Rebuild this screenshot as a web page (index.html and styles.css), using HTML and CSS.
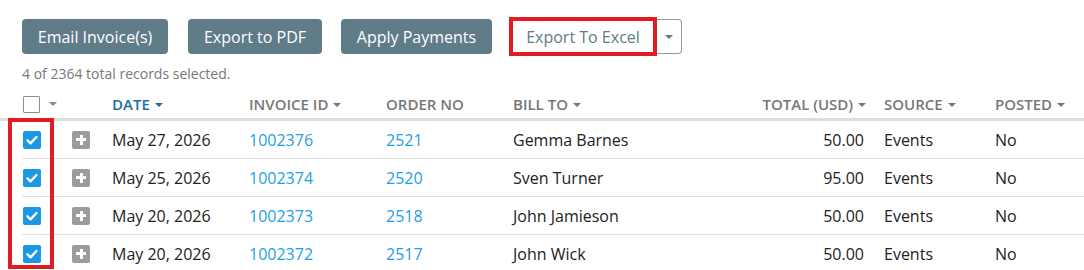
FILE: index.html
```html
<!DOCTYPE html>
<html>
<head>
<meta charset="utf-8">
<link rel="stylesheet" href="styles.css">
</head>
<body>
<div class="page">
  <div class="toolbar">
    <button class="btn">Email Invoice(s)</button>
    <button class="btn">Export to PDF</button>
    <button class="btn">Apply Payments</button>
    <div class="split">
      <button class="btn-excel">Export To Excel</button>
      <button class="btn-drop"><span class="caret"></span></button>
    </div>
  </div>
  <div class="status">4 of 2364 total records selected.</div>
  <div class="table">
    <div class="row head">
      <div class="c-chk"><span class="box"></span><span class="caret small"></span></div>
      <div></div>
      <div class="sorted">DATE <span class="caret"></span></div>
      <div>INVOICE ID <span class="caret"></span></div>
      <div>ORDER NO</div>
      <div>BILL TO <span class="caret"></span></div>
      <div class="num">TOTAL (USD) <span class="caret"></span></div>
      <div>SOURCE <span class="caret"></span></div>
      <div>POSTED <span class="caret"></span></div>
    </div>
    <div class="row">
      <div class="c-chk"><span class="box on"><svg viewBox="0 0 18 18"><path d="M4.5 9.3l3 3 6-6.3" /></svg></span></div>
      <div><span class="plus"></span></div>
      <div>May 27, 2026</div>
      <div><a>1002376</a></div>
      <div><a>2521</a></div>
      <div>Gemma Barnes</div>
      <div class="num">50.00</div>
      <div>Events</div>
      <div>No</div>
    </div>
    <div class="row">
      <div class="c-chk"><span class="box on"><svg viewBox="0 0 18 18"><path d="M4.5 9.3l3 3 6-6.3" /></svg></span></div>
      <div><span class="plus"></span></div>
      <div>May 25, 2026</div>
      <div><a>1002374</a></div>
      <div><a>2520</a></div>
      <div>Sven Turner</div>
      <div class="num">95.00</div>
      <div>Events</div>
      <div>No</div>
    </div>
    <div class="row">
      <div class="c-chk"><span class="box on"><svg viewBox="0 0 18 18"><path d="M4.5 9.3l3 3 6-6.3" /></svg></span></div>
      <div><span class="plus"></span></div>
      <div>May 20, 2026</div>
      <div><a>1002373</a></div>
      <div><a>2518</a></div>
      <div>John Jamieson</div>
      <div class="num">50.00</div>
      <div>Events</div>
      <div>No</div>
    </div>
    <div class="row">
      <div class="c-chk"><span class="box on"><svg viewBox="0 0 18 18"><path d="M4.5 9.3l3 3 6-6.3" /></svg></span></div>
      <div><span class="plus"></span></div>
      <div>May 20, 2026</div>
      <div><a>1002372</a></div>
      <div><a>2517</a></div>
      <div>John Wick</div>
      <div class="num">50.00</div>
      <div>Events</div>
      <div>No</div>
    </div>
    <div class="highlight"></div>
  </div>
</div>
</body>
</html>
```

FILE: styles.css
```css
* { box-sizing: border-box; }
html, body { margin: 0; padding: 0; background: #fff; }
body { font-family: "Open Sans", "DejaVu Sans", sans-serif; color: #222; width: 1084px; height: 270px; overflow: hidden; }
.page { padding-top: 17px; }
.toolbar { display: flex; align-items: center; padding-left: 22px; height: 39px; }
.btn {
  font-family: inherit; font-size: 16px; color: #fff; background: #607c89; white-space: nowrap;
  border: none; border-radius: 4px; height: 35px; padding: 0; margin-right: 20px; cursor: pointer;
}
.btn:nth-child(1) { width: 146px; }
.btn:nth-child(2) { width: 134px; margin-right: 19px; }
.btn:nth-child(3) { width: 151px; margin-right: 17px; }
.split { display: flex; align-items: center; }
.btn-excel {
  font-family: inherit; font-size: 16px; color: #5f7c8a; background: #fff; white-space: nowrap;
  border: 4px solid #e31b23; height: 39px; width: 148px; padding: 0; margin-right: -2px; position: relative; z-index: 1;
}
.btn-drop {
  width: 27px; height: 35px; background: #fff; border: 1px solid #8b9ba5; border-left: none;
  border-radius: 0 4px 4px 0; padding: 0; display: flex; align-items: center; justify-content: center;
}
.caret {
  display: inline-block; width: 0; height: 0; border-left: 4px solid transparent; border-right: 4px solid transparent;
  border-top: 4px solid #777; vertical-align: middle; margin-left: 2px;
}
.btn-drop .caret { border-top-color: #5f7c8a; margin: 0 0 0 1px; }
.status { font-size: 14px; color: #777; padding-left: 22px; margin-top: 9px; line-height: 18px; }
.table { position: relative; }
.row {
  display: grid;
  grid-template-columns: 50px 40px 137px 137px 127px 247px 124px 111px 1fr;
  align-items: center; height: 38px; margin-left: 22px; border-bottom: 1px solid #e2e2e2;
  font-size: 16px;
}
.row.head {
  height: 38px; padding-top: 7px; margin-left: 0; padding-left: 22px; border-bottom: 3px solid #dcdcdc;
  font-size: 15px; font-weight: 600; color: #777;
}
.row.head .sorted { color: #1f6fa3; }
.row.head .sorted .caret { border-top-color: #1f6fa3; }
.row.head .caret { margin-left: 1px; margin-top: -1px; }
.num { text-align: right; padding-right: 20px; }
.row.head .num { padding-right: 18px; }
.c-chk { display: flex; align-items: center; padding-left: 1px; }
.box {
  display: inline-block; width: 17px; height: 17px; border: 1.5px solid #8f8f8f; border-radius: 1px; background: #fff;
}
.row.head .caret.small { margin-left: 9px; border-top-color: #888; }
.box.on { background: #1a98e6; border: none; border-radius: 2px; width: 18px; height: 18px; }
.box svg { display: block; width: 18px; height: 18px; }
.box svg path { fill: none; stroke: #fff; stroke-width: 2.4; stroke-linecap: round; stroke-linejoin: round; }
.plus {
  display: block; width: 18px; height: 18px; background: #9c9c9c; border-radius: 2px; position: relative;
}
.plus::before, .plus::after { content: ""; position: absolute; background: #fff; }
.plus::before { left: 4px; top: 7.5px; width: 10px; height: 3px; }
.plus::after { left: 7.5px; top: 4px; width: 3px; height: 10px; }
a { color: #1da1e4; text-decoration: none; }
.highlight {
  position: absolute; left: 8px; top: 35px; width: 46px; height: 151px; border: 4px solid #e31b23; pointer-events: none;
}
```
